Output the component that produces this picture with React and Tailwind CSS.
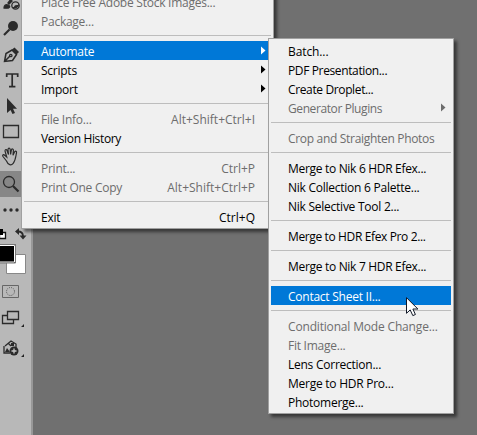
import React from 'react'

const FILE_MENU = [
  { label: 'Place Free Adobe Stock Images...', disabled: true },
  { label: 'Package...', disabled: true },
  null,
  { label: 'Automate', submenu: true, active: true },
  { label: 'Scripts', submenu: true },
  { label: 'Import', submenu: true },
  null,
  { label: 'File Info...', keys: 'Alt+Shift+Ctrl+I', disabled: true },
  { label: 'Version History', tracking: 'tracking-[-0.35px]' },
  null,
  { label: 'Print...', keys: 'Ctrl+P', disabled: true },
  { label: 'Print One Copy', keys: 'Alt+Shift+Ctrl+P', disabled: true },
  null,
  { label: 'Exit', keys: 'Ctrl+Q' },
]

const AUTOMATE_MENU = [
  { label: 'Batch...', tracking: 'tracking-[-0.1px]' },
  { label: 'PDF Presentation...', tracking: 'tracking-[-0.37px]' },
  { label: 'Create Droplet...', tracking: 'tracking-[-0.37px]' },
  { label: 'Generator Plugins', submenu: true, disabled: true, tracking: 'tracking-[-0.4px]' },
  null,
  { label: 'Crop and Straighten Photos', disabled: true, tracking: 'tracking-[-0.31px]' },
  null,
  { label: 'Merge to Nik 6 HDR Efex...', tracking: 'tracking-[-0.31px]' },
  { label: 'Nik Collection 6 Palette...' },
  { label: 'Nik Selective Tool 2...' },
  null,
  { label: 'Merge to HDR Efex Pro 2...', tracking: 'tracking-[-0.37px]' },
  null,
  { label: 'Merge to Nik 7 HDR Efex...', tracking: 'tracking-[-0.31px]' },
  null,
  { label: 'Contact Sheet II...', active: true },
  null,
  { label: 'Conditional Mode Change...', disabled: true, tracking: 'tracking-[-0.17px]' },
  { label: 'Fit Image...', disabled: true },
  { label: 'Lens Correction...' },
  { label: 'Merge to HDR Pro...' },
  { label: 'Photomerge...' },
]

function Menu({ items, className }) {
  return (
    <div className={`absolute border border-[#a0a0a0] bg-[#f0f0f0] p-[2px] shadow-[3px_3px_3px_rgba(0,0,0,0.5)] ${className}`}>
      {items.map((item, i) =>
        item ? <MenuItem key={item.label} {...item} /> : (
          <div key={i} className="h-[11px] pt-[5px]">
            <div className="h-px bg-[#bdbdbd]" />
          </div>
        )
      )}
    </div>
  )
}

function MenuItem({ label, keys, submenu, active, disabled, tracking = 'tracking-[-0.25px]' }) {
  const color = active ? 'bg-[#0078d7] text-white' : disabled ? 'text-[#6d6d6d]' : 'text-black'
  return (
    <div className={`flex h-[19px] items-start whitespace-nowrap pl-[17px] pr-[5px] ${color}`}>
      <span className={`mt-[2px] ${tracking}`}>{label}</span>
      {keys && <span className="mt-[2px] ml-auto mr-[11px]">{keys}</span>}
      {submenu && (
        <svg className="ml-auto mt-[5px]" width="5" height="9" viewBox="0 0 5 9" fill="currentColor">
          <path d="M0 .500 4.500 4.500 0 8.500z" />
        </svg>
      )}
    </div>
  )
}

function Toolbar() {
  return (
    <div className="h-full w-[33px] shrink-0 border-r-2 border-[#989898] bg-[#b8b8b8]">
      <svg width="31" height="435" viewBox="0 0 31 435" fill="none" stroke="#2b2b2b" strokeWidth="1.3">
        {/* mixer brush */}
        <path d="M4 8c0-3 2-4 4-3 3 1 2 4-4 3zM8 3l3-4 1 2-3 3z" fill="#2b2b2b" />
        <circle cx="15.500" cy="5.500" r="3.700" />
        <path d="M12 7a4 4 0 0 0 7-3c-2 2-4 0-5 3z" fill="#2b2b2b" stroke="none" />
        {/* dodge */}
        <circle cx="13" cy="26" r="5" fill="#2b2b2b" stroke="none" />
        <path d="M9.500 29.500 4 35" strokeWidth="2.200" />
        {/* pen */}
        <path d="m4.500 61.500 1.500-8 6-3.500 4.500 4.500-4 6zM4.500 61.500l5.500-5.500" strokeWidth="1.500" />
        <path d="m12 49.500 2.500-2 4.500 4.500-2.500 2.500z" fill="#2b2b2b" stroke="none" />
        <circle cx="10.800" cy="55.500" r="1.200" />
        {/* type */}
        <path d="M6.700 77V74h11v3M12.200 74v13M9 86.700h6.400" strokeWidth="1.700" />
        {/* path select */}
        <path d="M7 98v15l3.500-3 2 4 2.500-1-2-4.200h4z" fill="#2b2b2b" stroke="none" />
        {/* shape */}
        <path d="M3.500 125.500h15v12h-15z" />
        {/* hand */}
        <path d="m6.500 161-3.500-4.500c-1-2 .5-2.500 2-1l1.700 1.500-1.700-6c0-1.800 1.500-2 2-.5l1.500 4-.5-5c.2-1.800 1.900-1.800 2.200 0l.4 5 .8-4.500c.6-1.600 2-1.200 2 .3l-.4 5 1.600-3.500c1-1.300 2.200-.5 1.900 1-.8 3.500-.8 7.500-3.300 10.500-2 2.500-5 2-6.700-2.300z" strokeWidth="1.200" />
        {/* zoom */}
        <path d="M0 171h21v26H0z" fill="#878787" stroke="none" />
        <circle cx="9" cy="182" r="5.500" />
        <path d="m13 186 5.500 5.500" strokeWidth="2.200" />
        <g fill="#2b2b2b" stroke="none">
          <circle cx="5" cy="210" r="1.700" />
          <circle cx="11" cy="210" r="1.700" />
          <circle cx="17" cy="210" r="1.700" />
        </g>
        {/* default colors and swap */}
        <path d="M-.5 232.500h6v6h-6z" fill="#fff" stroke="#111" />
        <path d="M0 229h3v6H0z" fill="#000" stroke="none" />
        <path d="M18 231.500c3.500 0 5 1.500 5 5" strokeWidth="1.800" />
        <path d="m15 231.500 4-3.500v7zM19.500 235.500h7l-3.500 4z" fill="#2b2b2b" stroke="none" />
        {/* background / foreground swatches */}
        <path d="M6.500 254.500h19v19h-19z" fill="#fff" stroke="#888" strokeWidth="1" />
        <path d="M-4 244.500h19.500v18.500H-4z" fill="#000" stroke="#777" strokeWidth="1" />
        <path d="M-4 245.500h18.500v16.500H-4z" stroke="#fff" strokeWidth="1" />
        {/* quick mask */}
        <path d="M2.500 285.500h16v12h-16z" stroke="#666" strokeWidth="1" />
        <circle cx="10.500" cy="291.500" r="4" stroke="#555" strokeWidth="1" strokeDasharray="1 1.100" />
        {/* screen mode */}
        <path d="M2.500 315.500h11v8h-11z" />
        <path d="M7.500 311.500h11v8h-11z" fill="#b8b8b8" />
        <path d="M24 324v3h-3zM24 354v3h-3z" fill="#222" stroke="none" />
        {/* share image */}
        <path d="m5 346 6-5 5 3v4M4 346v7h6M8 343l3 3" />
        <path d="m5 352 2-4 3 4zM11 343h3v3h-3z" fill="#2b2b2b" stroke="none" />
        <circle cx="14" cy="351" r="4.500" fill="#2b2b2b" stroke="none" />
        <path d="M11.500 351h5M14 348.500v5" stroke="#c8c8c8" />
      </svg>
    </div>
  )
}

export default function App() {
  return (
    <div className="relative flex h-[435px] w-[477px] overflow-hidden bg-[#707070] font-['Open_Sans','Noto_Sans',sans-serif] text-[12px] leading-[18px]">
      <Toolbar />
      <Menu items={FILE_MENU} className="-top-[11px] left-[21px] w-[253px]" />
      <Menu items={AUTOMATE_MENU} className="left-[268px] top-[38px] w-[186px]" />
      <svg className="absolute left-[406px] top-[297px]" width="13" height="20" viewBox="0 0 13 20">
        <path d="M.5.700v15.600l3.700-3.400 2.600 5.700 2.600-1.100-2.500-5.500h5z" fill="#fff" stroke="#111827" />
      </svg>
    </div>
  )
}
